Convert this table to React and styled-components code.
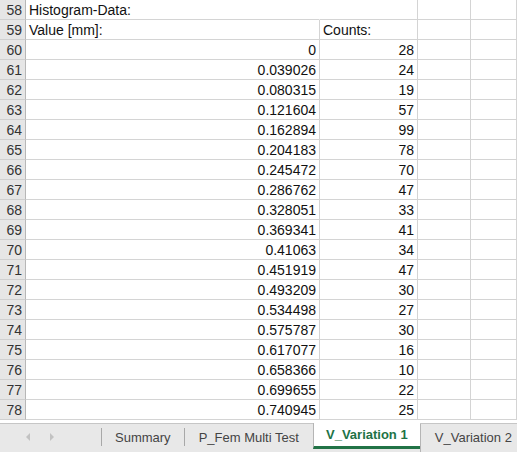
import React from 'react';
import styled, { createGlobalStyle } from 'styled-components';

const GlobalStyle = createGlobalStyle`
  html, body {
    margin: 0;
    padding: 0;
    background: #ffffff;
  }
  body {
    font-family: "Liberation Sans", Arial, sans-serif;
    width: 517px;
    height: 452px;
    overflow: hidden;
  }
`;

const Sheet = styled.div`
  display: flex;
  flex-direction: column;
  width: 517px;
  height: 452px;
`;

const Grid = styled.div`
  display: grid;
  grid-template-columns: 26px 294px 98px 53px 46px;
  grid-auto-rows: 20px;
  height: 423px;
  align-content: start;
`;

const RowHead = styled.div`
  box-sizing: border-box;
  background: #e6e6e6;
  border-right: 1px solid #b7b7b7;
  border-bottom: 1px solid #d0d0d0;
  color: #333;
  font-size: 14px;
  text-align: right;
  padding-right: 3px;
  line-height: 20px;
`;

const Cell = styled.div`
  box-sizing: border-box;
  border-right: 1px solid #d4d4d4;
  border-bottom: 1px solid #d4d4d4;
  font-size: 14px;
  color: #111;
  line-height: 20px;
  padding: 0 3px;
  white-space: nowrap;
  overflow: visible;
  text-align: ${p => (p.$num ? 'right' : 'left')};
  ${p => p.$span && 'border-right-color: transparent;'}
`;

const TabBar = styled.div`
  box-sizing: border-box;
  flex: 1;
  display: flex;
  align-items: stretch;
  background: #e8e8e8;
  border-top: 1px solid #c6c6c6;
  font-size: 13px;
`;

const Nav = styled.div`
  display: flex;
  align-items: center;
  gap: 20px;
  width: 101px;
  padding-left: 26px;
  box-sizing: border-box;
  padding-bottom: 3px;
`;

const Arrow = styled.span`
  width: 0;
  height: 0;
  border-top: 4px solid transparent;
  border-bottom: 4px solid transparent;
  ${p => (p.$left ? 'border-right: 4px solid #c2c2c2;' : 'border-left: 4px solid #c2c2c2;')}
`;

const Sep = styled.div`
  width: 1px;
  background: #a8a8a8;
  margin: 4px 0 6px;
`;

const Tab = styled.div`
  box-sizing: border-box;
  display: flex;
  align-items: center;
  padding: 0 ${p => p.$pad || 14}px 2px;
  color: #444;
  white-space: nowrap;
`;

const ActiveTab = styled.div`
  box-sizing: border-box;
  display: flex;
  align-items: center;
  justify-content: center;
  width: 107px;
  margin-top: -1px;
  margin-bottom: 3px;
  background: #ffffff;
  border-left: 1px solid #b5b5b5;
  border-bottom: 3px solid #217346;
  color: #217346;
  font-weight: bold;
  white-space: nowrap;
`;

const OtherTab = styled.div`
  box-sizing: border-box;
  display: flex;
  align-items: center;
  flex: 1;
  padding: 0 0 2px 14px;
  border-left: 1px solid #b5b5b5;
  color: #444;
  white-space: nowrap;
`;

const values = [
  ['0', '28'],
  ['0.039026', '24'],
  ['0.080315', '19'],
  ['0.121604', '57'],
  ['0.162894', '99'],
  ['0.204183', '78'],
  ['0.245472', '70'],
  ['0.286762', '47'],
  ['0.328051', '33'],
  ['0.369341', '41'],
  ['0.41063', '34'],
  ['0.451919', '47'],
  ['0.493209', '30'],
  ['0.534498', '27'],
  ['0.575787', '30'],
  ['0.617077', '16'],
  ['0.658366', '10'],
  ['0.699655', '22'],
  ['0.740945', '25'],
];

function App() {
  return (
    <React.Fragment>
      <GlobalStyle />
      <Sheet>
        <Grid>
          <RowHead>58</RowHead>
          <Cell $span>Histogram-Data:</Cell>
          <Cell />
          <Cell />
          <Cell />

          <RowHead>59</RowHead>
          <Cell>Value [mm]:</Cell>
          <Cell>Counts:</Cell>
          <Cell />
          <Cell />

          {values.map(([v, c], i) => (
            <React.Fragment key={i}>
              <RowHead>{60 + i}</RowHead>
              <Cell $num>{v}</Cell>
              <Cell $num>{c}</Cell>
              <Cell />
              <Cell />
            </React.Fragment>
          ))}
        </Grid>
        <TabBar>
          <Nav>
            <Arrow $left />
            <Arrow />
          </Nav>
          <Sep />
          <Tab $pad={13}>Summary</Tab>
          <Sep />
          <Tab $pad={14}>P_Fem Multi Test</Tab>
          <ActiveTab>V_Variation 1</ActiveTab>
          <OtherTab>V_Variation 2</OtherTab>
        </TabBar>
      </Sheet>
    </React.Fragment>
  );
}

export default App;
